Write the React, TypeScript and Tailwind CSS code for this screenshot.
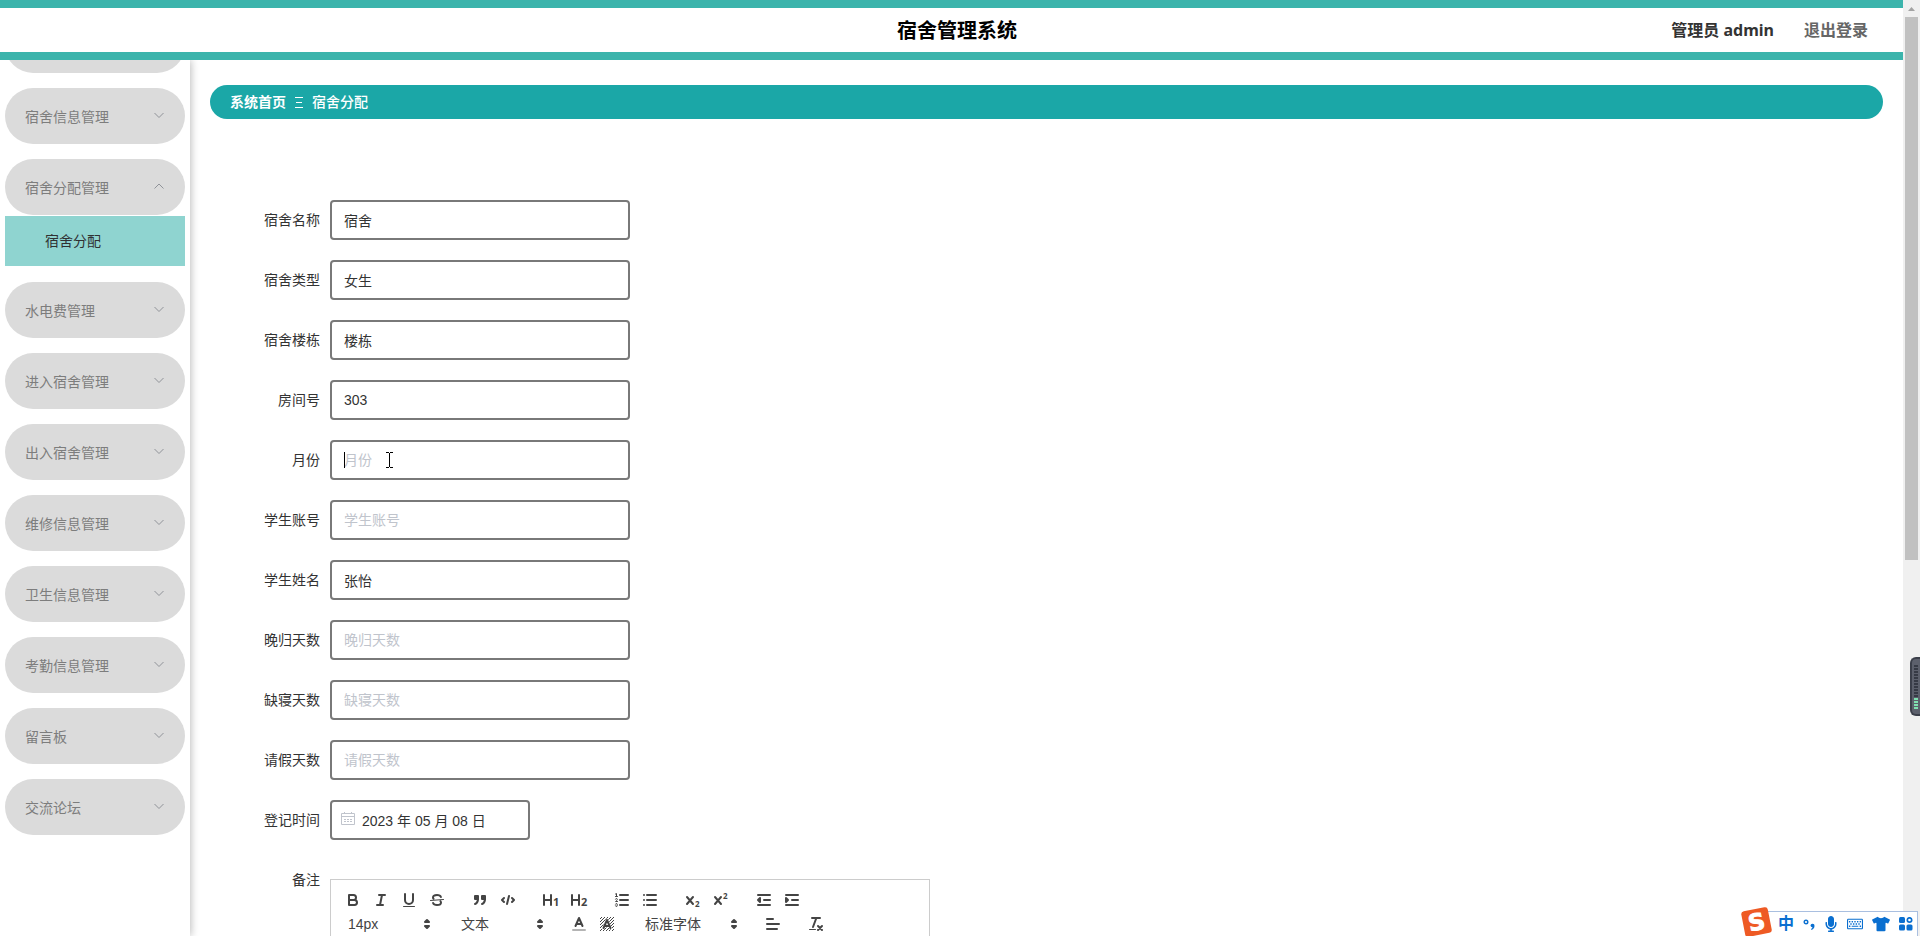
import React, { useState } from 'react';
import { FaMicrophone, FaRegKeyboard, FaTshirt } from 'react-icons/fa';

const menus = [
  { name: '宿舍信息管理', children: [] },
  { name: '宿舍分配管理', children: ['宿舍分配'] },
  { name: '水电费管理', children: [] },
  { name: '进入宿舍管理', children: [] },
  { name: '出入宿舍管理', children: [] },
  { name: '维修信息管理', children: [] },
  { name: '卫生信息管理', children: [] },
  { name: '考勤信息管理', children: [] },
  { name: '留言板', children: [] },
  { name: '交流论坛', children: [] },
];

const fields = [
  { id: 'sushemingcheng', label: '宿舍名称', value: '宿舍' },
  { id: 'susheleixing', label: '宿舍类型', value: '女生' },
  { id: 'susheloudong', label: '宿舍楼栋', value: '楼栋' },
  { id: 'fangjianhao', label: '房间号', value: '303' },
  { id: 'yuefen', label: '月份', value: '' },
  { id: 'xueshengzhanghao', label: '学生账号', value: '' },
  { id: 'xueshengxingming', label: '学生姓名', value: '张怡' },
  { id: 'wanguitianshu', label: '晚归天数', value: '' },
  { id: 'queqintianshu', label: '缺寝天数', value: '' },
  { id: 'qingjiatianshu', label: '请假天数', value: '' },
];

const Arrow = ({ up }: { up: boolean }) => (
  <svg className="w-3 h-3 mb-1" viewBox="0 0 12 12" fill="none" stroke="#909399" strokeWidth="1">
    <path d={up ? 'M1.5 8.5 6 4l4.5 4.5' : 'M1.5 4 6 8.5 10.5 4'} />
  </svg>
);

// Editor toolbar icons, 18x18 grid
const Icon = ({ children }: { children: React.ReactNode }) => (
  <svg
    className="w-[18px] h-[18px]"
    viewBox="0 0 18 18"
    fill="none"
    stroke="#444"
    strokeWidth="2"
    strokeLinecap="round"
    strokeLinejoin="round"
  >
    {children}
  </svg>
);

const Digit = ({ x, y, size, children }: { x: number; y: number; size: number; children: string }) => (
  <text x={x} y={y} fontSize={size} fontWeight="bold" fontFamily="Open Sans, sans-serif" fill="#444" stroke="none">
    {children}
  </text>
);

const icons = {
  bold: (
    <Icon>
      <path d="M5,4H9.5A2.5,2.5,0,0,1,9.5,9H5Z" />
      <path d="M5,9h5.5A2.5,2.5,0,0,1,10.5,14H5Z" />
    </Icon>
  ),
  italic: (
    <Icon>
      <path d="M7 4H13M5 14H11M8 14 10 4" />
    </Icon>
  ),
  underline: (
    <Icon>
      <path d="M5,3V9a4,4,0,0,0,8,0V3" />
      <rect x="3" y="15" width="12" height="1" rx="0.5" fill="#444" stroke="none" />
    </Icon>
  ),
  strike: (
    <Icon>
      <path d="M15.5 8.5 2.5 9.5" strokeWidth="1" />
      <path d="M12.9 6C12.5 4.8 10.9 4 9 4 6.8 4 5 5.1 5 6.5c0 .6.2 1 .6 1.4M5.1 12C5.5 13.2 7.1 14 9 14c2.2 0 4-1.1 4-2.5 0-.6-.2-1-.6-1.4" />
    </Icon>
  ),
  quote: (
    <Icon>
      <rect x="4" y="5" width="3" height="3" fill="#444" />
      <rect x="11" y="5" width="3" height="3" fill="#444" />
      <path d="M7,8c0,4.031-3,5-3,5M14,8c0,4.031-3,5-3,5" fill="#444" />
    </Icon>
  ),
  code: (
    <Icon>
      <path d="M5 7 3 9 5 11M13 7 15 9 13 11M10 5 8 13" strokeWidth="2" />
    </Icon>
  ),
  h1: (
    <Icon>
      <path d="M2 4V14M9 4V14M2 9H9" />
      <Digit x={11} y={15} size={11}>1</Digit>
    </Icon>
  ),
  h2: (
    <Icon>
      <path d="M2 4V14M9 4V14M2 9H9" />
      <Digit x={11} y={15} size={11}>2</Digit>
    </Icon>
  ),
  ordered: (
    <Icon>
      <path d="M7 4H15M7 9H15M7 14H15" />
      <path d="M2.5 5.5h2M3.5 5.5v-3l-1 .5" strokeWidth="1" />
      <path d="M4.5,10.5h-2c0-.234,1.85-1.076,1.85-2.234A0.959,0.959,0,0,0,2.5,8.156" strokeWidth="1" />
      <path d="M2.5,14.846a0.959,0.959,0,0,0,1.85-.109A0.7,0.7,0,0,0,3.75,14a0.688,0.688,0,0,0,.6-0.736,0.959,0.959,0,0,0-1.85-.109" strokeWidth="1" />
    </Icon>
  ),
  bullet: (
    <Icon>
      <path d="M6 4H15M6 9H15M6 14H15M3 4H3M3 9H3M3 14H3" />
    </Icon>
  ),
  sub: (
    <Icon>
      <path d="M3 6 9 13M9 6 3 13" />
      <Digit x={11} y={16} size={8}>2</Digit>
    </Icon>
  ),
  sup: (
    <Icon>
      <path d="M3 6 9 13M9 6 3 13" />
      <Digit x={11} y={8} size={8}>2</Digit>
    </Icon>
  ),
  outdent: (
    <Icon>
      <path d="M3 14H15M3 4H15M9 9H15" />
      <path d="M5 7V11L3 9Z" fill="#444" />
    </Icon>
  ),
  indent: (
    <Icon>
      <path d="M3 14H15M3 4H15M9 9H15" />
      <path d="M3 7V11L5 9Z" fill="#444" />
    </Icon>
  ),
  color: (
    <Icon>
      <path d="M3 15H15" opacity="0.4" />
      <path d="M5.5 11 9 3 12.5 11M6.4 9H11.6" />
    </Icon>
  ),
  background: (
    <Icon>
      <defs>
        <pattern id="hatch" width="3" height="3" patternUnits="userSpaceOnUse">
          <path d="M2 0h1v1h-1zM1 1h1v1h-1zM0 2h1v1h-1z" fill="#444" stroke="none" />
        </pattern>
      </defs>
      <rect x="2" y="2" width="14" height="14" fill="url(#hatch)" stroke="none" shapeRendering="crispEdges" />
      <path d="M5.5 13 9 5 12.5 13M6.4 11H11.6" stroke="#fff" strokeWidth="3" />
      <path d="M5.5 13 9 5 12.5 13M6.4 11H11.6" />
    </Icon>
  ),
  align: (
    <Icon>
      <path d="M3 9H15M3 14H13M3 4H9" />
    </Icon>
  ),
  clean: (
    <Icon>
      <path d="M5 3H13M6 12 9.35 3M11 11 15 15M15 11 11 15" />
      <rect x="2" y="14" width="7" height="1" rx="0.5" fill="#444" stroke="none" />
    </Icon>
  ),
};

const Tools = ({ names }: { names: (keyof typeof icons)[] }) => (
  <div className="flex mr-[15px]">
    {names.map((name) => (
      <button key={name} type="button" aria-label={name} className="w-7 h-6 flex items-center justify-center">
        {icons[name]}
      </button>
    ))}
  </div>
);

const Picker = ({ label, text, wide }: { label: string; text: string; wide?: boolean }) => (
  <div className={`${wide ? 'w-[108px]' : 'w-[98px]'} relative h-6 mr-[15px]`}>
    <select aria-label={label} className="appearance-none w-full h-6 pl-[9px] pr-5 text-sm leading-6 text-[#444] bg-transparent">
      <option>{text}</option>
    </select>
    <svg
      className="absolute right-px top-[3px] w-[18px] h-[18px] pointer-events-none"
      viewBox="0 0 18 18"
      fill="#444"
      stroke="#444"
      strokeWidth="2"
      strokeLinejoin="round"
    >
      <path d="M7 11 9 13 11 11ZM7 7 9 5 11 7Z" />
    </svg>
  </div>
);

const Header = () => (
  <header className="relative z-20 shrink-0 h-[60px] border-y-8 border-[#3cb4ac] bg-white grid grid-cols-[1fr_auto_1fr] items-center pl-[46px] pr-[35px]">
    <h1 className="col-start-2 pt-[2px] text-xl font-bold text-black">宿舍管理系统</h1>
    <div className="flex justify-end gap-[30px] text-base font-bold font-['Noto_Sans','Noto_Sans_CJK_SC',sans-serif]">
      <span className="text-[#333]">管理员 admin</span>
      <button type="button" className="text-[#666]">退出登录</button>
    </div>
  </header>
);

const Sidebar = () => {
  const [opened, setOpened] = useState('宿舍分配管理');

  return (
    <aside className="relative z-10 shrink-0 w-[190px] bg-white shadow-[1px_0_8px_#bbb]">
      {/* list is scrolled down, the entry above is mostly under the header */}
      <nav className="-mt-[43px] px-[5px] flex flex-col gap-[15px]">
        <div className="h-14 shrink-0 rounded-full bg-[#dbdbdb]" />
        {menus.map((menu) => (
          <div key={menu.name}>
            <button
              type="button"
              onClick={() => setOpened(opened === menu.name ? '' : menu.name)}
              className="w-full h-14 px-5 pt-px rounded-full bg-[#dbdbdb] flex items-center justify-between text-sm text-[#7d7d7d]"
            >
              {menu.name}
              <Arrow up={opened === menu.name} />
            </button>
            {opened === menu.name &&
              menu.children.map((child) => (
                <a key={child} href="#" className="block my-px h-[50px] pl-10 bg-[#8fd4d0] text-sm leading-[50px] text-[#303133]">
                  {child}
                </a>
              ))}
          </div>
        ))}
      </nav>
    </aside>
  );
};

const inputClass =
  'h-10 rounded border-2 border-[#797979] bg-white text-sm text-[#333] placeholder:text-[#c0c4cc] outline-none';

const AllotForm = () => (
  <form className="mt-[81px] pl-10 flex flex-col gap-5">
    {fields.map((field) => (
      <div key={field.id} className="flex">
        <label htmlFor={field.id} className="w-20 pr-[10px] text-right text-sm leading-10 text-[#333]">
          {field.label}
        </label>
        <div className="relative">
          <input
            id={field.id}
            type="text"
            defaultValue={field.value}
            placeholder={field.label}
            className={`${inputClass} w-[300px] px-3`}
          />
          {field.id === 'yuefen' && (
            <>
              <span className="absolute left-[14px] top-3 w-px h-4 bg-black" />
              <svg className="absolute left-[56px] top-3 w-[7px] h-4" viewBox="0 0 7 16" fill="#000" shapeRendering="crispEdges">
                <path d="M0 0h3v1H0zM4 0h3v1H4zM3 1h1v14H3zM0 15h3v1H0zM4 15h3v1H4z" />
              </svg>
            </>
          )}
        </div>
      </div>
    ))}

    <div className="flex">
      <label htmlFor="dengjishijian" className="w-20 pr-[10px] text-right text-sm leading-10 text-[#333]">
        登记时间
      </label>
      <div className="relative">
        <svg className="absolute left-[11px] top-3 w-[14px] h-[14px]" viewBox="0 0 14 14" fill="none" stroke="#c0c4cc">
          <path d="M.5 1.5h13v11H.5zM.5 4.5h13M3.5 0v2M10.5 0v2" />
          <path d="M3 7.500h8M3 9.500h8" strokeDasharray="2 1" />
        </svg>
        <input
          id="dengjishijian"
          type="text"
          defaultValue="2023 年 05 月 08 日"
          className={`${inputClass} w-[200px] pl-[30px] pr-3`}
        />
      </div>
    </div>

    <div className="flex">
      <span className="w-20 pr-[10px] text-right text-sm leading-10 text-[#333]">备注</span>
      <div className="mt-[19px] w-[600px] border border-[#ccc] h-[300px]">
        <div className="p-2 flex flex-wrap border-b border-[#ccc]">
          <Tools names={['bold', 'italic', 'underline', 'strike']} />
          <Tools names={['quote', 'code']} />
          <Tools names={['h1', 'h2']} />
          <Tools names={['ordered', 'bullet']} />
          <Tools names={['sub', 'sup']} />
          <Tools names={['outdent', 'indent']} />
          <Picker label="字号" text="14px" />
          <Picker label="标题" text="文本" />
          <Tools names={['color', 'background']} />
          <Picker label="字体" text="标准字体" wide />
          <Tools names={['align']} />
          <Tools names={['clean']} />
        </div>
      </div>
    </div>
  </form>
);

const Scrollbar = () => (
  <div className="shrink-0 w-[17px] bg-[#f0f0f0] flex flex-col items-center">
    <svg className="w-[17px] h-[17px] shrink-0" viewBox="0 0 17 17" fill="#a3a3a3">
      <path d="M5 11 8.5 7 12 11Z" />
    </svg>
    <div className="w-[13px] h-[58%] bg-[#c1c1c1]" />
  </div>
);

// Small level meter docked to the screen edge
const Meter = () => (
  <div className="absolute z-30 right-0 top-[657px] w-[10px] h-[59px] rounded-l-md border-2 border-r-0 border-[#3b3f4a] bg-[#5c606c] flex flex-col items-center gap-px pt-[6px]">
    {Array.from({ length: 15 }, (_, i) => (
      <span key={i} className={i < 11 ? 'w-1 h-[2px] shrink-0 bg-[#363a45]' : 'w-1 h-[2px] shrink-0 bg-[#7fe0b0]'} />
    ))}
  </div>
);

const InputMethodBar = () => (
  <div className="absolute z-30 right-[2px] bottom-0 w-[172px] h-[25px] pl-[31px] pr-1 bg-white border border-b-0 border-[#a9bfe0] flex items-center justify-between text-[#0a6fd0]">
    <svg className="absolute -left-[6px] -top-[6px] w-8 h-[30px]" viewBox="0 0 32 30">
      <g transform="rotate(-11 16 16)">
        <rect x="2" y="3" width="27" height="26" rx="3" fill="#ee5a24" />
        <text x="15.5" y="24" textAnchor="middle" fontSize="23" fontWeight="bold" fontFamily="DejaVu Sans, sans-serif" fill="#fff" stroke="#fff">
          S
        </text>
      </g>
    </svg>
    <span className="text-base leading-6 font-bold">中</span>
    <svg className="w-3 h-4" viewBox="0 0 12 16" fill="currentColor">
      <circle cx="3" cy="6" r="1.8" fill="none" stroke="currentColor" strokeWidth="1.4" />
      <path d="M7.5 9.5a2 2 0 1 1 4 .3c0 2-1 3.4-3 4.2l-.5-1c1-.5 1.4-1 1.4-1.7a2 2 0 0 1-1.9-1.8z" />
    </svg>
    <FaMicrophone className="w-[14px] h-4" />
    <FaRegKeyboard className="w-4 h-4" />
    <FaTshirt className="w-[18px] h-[18px]" />
    <svg className="w-[14px] h-[14px]" viewBox="0 0 14 14" fill="currentColor">
      <rect x="0" y="0" width="6" height="6" rx="1.5" />
      <circle cx="10.5" cy="3" r="2.2" fill="none" stroke="currentColor" strokeWidth="1.7" />
      <rect x="0" y="7.5" width="6" height="6" rx="1.5" />
      <rect x="7.5" y="7.5" width="6" height="6" rx="1.5" />
    </svg>
  </div>
);

const App = () => {
  return (
    <div className="relative h-screen overflow-hidden flex bg-white font-['Liberation_Sans','Noto_Sans_CJK_SC',sans-serif]">
      <div className="flex-1 min-w-0 flex flex-col">
        <Header />
        <div className="flex-1 min-h-0 flex">
          <Sidebar />
          <main className="flex-1 min-w-0 overflow-hidden px-5 pt-[25px]">
            {/* Breadcrumb */}
            <div className="h-[34px] px-5 rounded-full bg-[#1ba7a7] flex items-center gap-[9px] text-sm text-white">
              <a href="#" className="font-bold">系统首页</a>
              <svg className="w-2 h-3" viewBox="0 0 8 12" stroke="currentColor">
                <path d="M0 1.5h8M1 6.5h6M0 11.5h8" />
              </svg>
              <span className="font-medium">宿舍分配</span>
            </div>
            <AllotForm />
          </main>
        </div>
      </div>
      <Scrollbar />
      <Meter />
      <InputMethodBar />
    </div>
  );
};

export default App;
